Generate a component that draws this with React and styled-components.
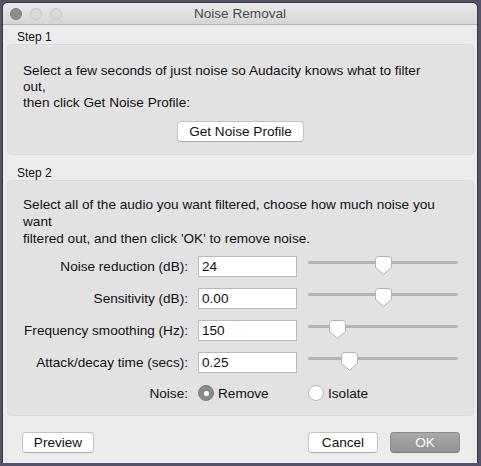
import React from 'react'
import styled, {createGlobalStyle} from 'styled-components'

const GlobalStyle = createGlobalStyle`
  html, body {
    margin: 0;
    padding: 0;
    background: #56546a;
  }
  body {
    font-family: "Liberation Sans", Arial, sans-serif;
    font-size: 13.6px;
    color: #111;
  }
`

const Window = styled.div`
  margin: 3px 0 0 3px;
  width: 474px;
  height: 460px;
  background: #ececec;
  border-radius: 5px 5px 0 0;
  box-shadow: 0 0 0 1px rgba(20, 18, 40, 0.45);
  display: flex;
  flex-direction: column;
  overflow: hidden;
`

const TitleBar = styled.div`
  height: 21px;
  flex: none;
  display: flex;
  align-items: center;
  position: relative;
  background: linear-gradient(#ebebeb, #d5d5d5);
  border-bottom: 1px solid #b4b4b4;
`

const Lights = styled.div`
  display: flex;
  gap: 8px;
  padding-left: 7px;
  margin-top: 1px;
`

const Light = styled.span`
  width: 12px;
  height: 12px;
  border-radius: 50%;
  box-sizing: border-box;
  background: ${p => (p.$active ? '#8d8d8d' : '#dadada')};
  border: 1px solid ${p => (p.$active ? '#7a7a7a' : '#c6c6c6')};
`

const Title = styled.div`
  position: absolute;
  left: 0;
  right: 0;
  text-align: center;
  color: #4a4a4a;
  font-size: 13.6px;
  pointer-events: none;
`

const StepHeading = styled.div`
  font-size: 12px;
  line-height: 13px;
  padding: ${p => p.$top}px 0 0 14px;
  height: ${p => p.$height}px;
  box-sizing: border-box;
`

const Box = styled.div`
  margin: 0 3px 0 4px;
  height: ${p => p.$height}px;
  box-sizing: border-box;
  background: #e2e2e2;
  border: 1px solid #dadada;
  border-radius: 4px;
  padding-top: ${p => p.$padTop}px;
`

const Para = styled.div`
  padding-left: 15px;
  line-height: ${p => p.$lh}px;
  & span {
    display: block;
    white-space: nowrap;
  }
`

const Center = styled.div`
  display: flex;
  justify-content: center;
  margin-top: 10px;
`

const Button = styled.button`
  font-family: inherit;
  font-size: 13.6px;
  height: 21px;
  width: ${p => p.$width}px;
  padding: 0;
  box-sizing: border-box;
  border-radius: 4px;
  border: 1px solid ${p => (p.$primary ? '#8c8c8c' : '#c2c2c2')};
  border-bottom-color: ${p => (p.$primary ? '#7e7e7e' : '#a9a9a9')};
  background: ${p =>
    p.$primary ? 'linear-gradient(#a9a9a9, #939393)' : '#ffffff'};
  color: ${p => (p.$primary ? '#ffffff' : '#111')};
`

const Grid = styled.div`
  display: grid;
  grid-template-columns: 180px 100px 150px;
  column-gap: 10px;
  row-gap: 11px;
  margin-top: 9px;
  align-items: center;
`

const Label = styled.div`
  text-align: right;
  white-space: nowrap;
`

const Input = styled.div`
  width: 99px;
  height: 21px;
  box-sizing: border-box;
  background: #fff;
  border: 1px solid #b9b9b9;
  padding-left: 3px;
  line-height: 19px;
`

const SliderWrap = styled.div`
  position: relative;
  height: 21px;
  width: 150px;
`

const Track = styled.div`
  position: absolute;
  left: 0;
  right: 0;
  top: 5px;
  height: 3px;
  border-radius: 2px;
  background: #b3b3b3;
`

const Thumb = styled.svg`
  position: absolute;
  top: 0;
  width: 17px;
  height: 19px;
`

const RadioRow = styled.div`
  display: flex;
  align-items: center;
  gap: 4px;
  height: 20px;
  margin-top: -1px;
`

const RadioDot = styled.span`
  width: 16px;
  height: 16px;
  border-radius: 50%;
  box-sizing: border-box;
  display: flex;
  align-items: center;
  justify-content: center;
  background: ${p => (p.$on ? '#8b8b8b' : '#fff')};
  border: 1px solid ${p => (p.$on ? '#7d7d7d' : '#b5b5b5')};
  &::after {
    content: '';
    width: 5px;
    height: 5px;
    border-radius: 50%;
    background: #fff;
    display: ${p => (p.$on ? 'block' : 'none')};
  }
`

const Footer = styled.div`
  display: flex;
  align-items: center;
  padding: 16px 17px 0 19px;
  gap: 12px;
`

const Spacer = styled.div`
  flex: 1;
`

const Slider = ({value}) => (
  <SliderWrap>
    <Track />
    <Thumb viewBox="0 0 17 19" style={{left: `${value * 133}px`}}>
      <path
        d="M3.5 0.5 H13.5 A3 3 0 0 1 16.5 3.5 V11.5 L8.5 18.3 L0.5 11.5 V3.5 A3 3 0 0 1 3.5 0.5 Z"
        fill="#fff"
        stroke="#b0b0b0"
        strokeWidth="1"
      />
    </Thumb>
  </SliderWrap>
)

const rows = [
  {label: 'Noise reduction (dB):', value: '24', pos: 0.5},
  {label: 'Sensitivity (dB):', value: '0.00', pos: 0.5},
  {label: 'Frequency smoothing (Hz):', value: '150', pos: 0.155},
  {label: 'Attack/decay time (secs):', value: '0.25', pos: 0.25}
]

const App = () => (
  <>
    <GlobalStyle />
    <Window>
      <TitleBar>
        <Lights>
          <Light $active />
          <Light />
          <Light />
        </Lights>
        <Title>Noise Removal</Title>
      </TitleBar>

      <StepHeading $top={6} $height={19}>Step 1</StepHeading>
      <Box $height={111} $padTop={18}>
        <Para $lh={16}>
          <span>Select a few seconds of just noise so Audacity knows what to filter</span>
          <span>out,</span>
          <span>then click Get Noise Profile:</span>
        </Para>
        <Center>
          <Button $width={127}>Get Noise Profile</Button>
        </Center>
      </Box>

      <StepHeading $top={12} $height={25}>Step 2</StepHeading>
      <Box $height={236} $padTop={15}>
        <Para $lh={17}>
          <span>Select all of the audio you want filtered, choose how much noise you</span>
          <span>want</span>
          <span>filtered out, and then click 'OK' to remove noise.</span>
        </Para>
        <Grid>
          {rows.map(r => (
            <React.Fragment key={r.label}>
              <Label>{r.label}</Label>
              <Input>{r.value}</Input>
              <Slider value={r.pos} />
            </React.Fragment>
          ))}
          <Label>Noise:</Label>
          <RadioRow>
            <RadioDot $on />
            Remove
          </RadioRow>
          <RadioRow>
            <RadioDot />
            Isolate
          </RadioRow>
        </Grid>
      </Box>

      <Footer>
        <Button $width={72}>Preview</Button>
        <Spacer />
        <Button $width={70}>Cancel</Button>
        <Button $width={70} $primary>OK</Button>
      </Footer>
    </Window>
  </>
)

export default App
